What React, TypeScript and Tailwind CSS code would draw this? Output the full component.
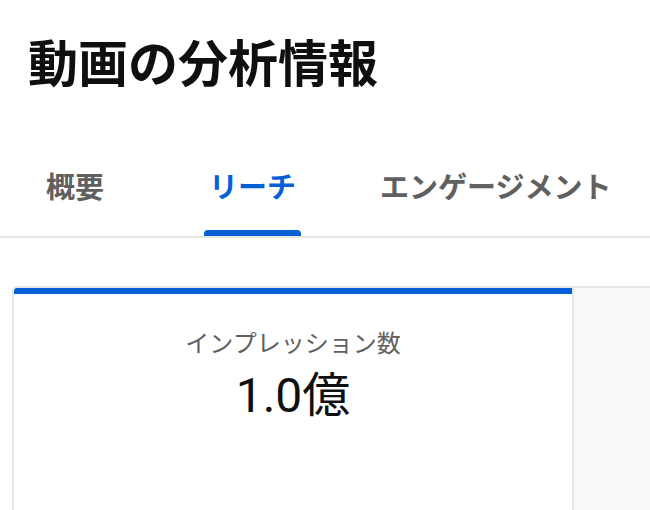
import React from "react";

const jp = { fontFamily: '"Noto Sans CJK JP", "Noto Sans", sans-serif' };
const num = { fontFamily: 'Roboto, "Noto Sans CJK JP", sans-serif' };

const tabs = [
  { label: "概要", active: false, ml: "ml-0" },
  { label: "リーチ", active: true, ml: "ml-[95px]" },
  { label: "エンゲージメント", active: false, ml: "ml-[74px]" },
];

export default function App() {
  return (
    <div className="h-[510px] w-[650px] overflow-hidden bg-white" style={jp}>
      {/* タイトル */}
      <h1 className="px-[28px] pt-[35px] text-[50px] leading-[50px] font-bold text-[#0f0f0f]">
        動画の分析情報
      </h1>

      {/* タブ */}
      <div className="mt-[86px] flex pl-[41px]">
        {tabs.map((t) => (
          <div key={t.label} className={`${t.ml} flex flex-col`}>
            <span
              className={`px-[5px] text-[29px] leading-[29px] font-semibold whitespace-nowrap ${
                t.active ? "text-[#065fd4]" : "text-[#606060]"
              }`}
            >
              {t.label}
            </span>
            <div
              className={`mt-[30px] h-[6px] rounded-t-[4px] ${
                t.active ? "bg-[#065fd4]" : "bg-transparent"
              }`}
            />
          </div>
        ))}
      </div>
      <div className="h-[2px] w-full bg-[#e5e5e5]" />

      {/* カード */}
      <div className="mt-[48px] ml-[12px] flex h-[300px] w-[1200px] rounded-t-[5px] border-2 border-[#e5e5e5]">
        <div className="flex w-[558px] flex-col bg-white">
          <div className="h-[6px] rounded-tl-[3px] bg-[#065fd4]" />
          <div className="flex flex-col items-center pt-[36px]">
            <span className="text-[24px] leading-[24px] text-[#606060]">インプレッション数</span>
            <span
              className="mt-[18px] text-[48px] leading-[48px] font-normal text-[#0f0f0f]"
              style={num}
            >
              1.0億
            </span>
          </div>
        </div>
        <div className="flex-1 border-l-2 border-[#e5e5e5] bg-[#f9f9f9]" />
      </div>
    </div>
  );
}
